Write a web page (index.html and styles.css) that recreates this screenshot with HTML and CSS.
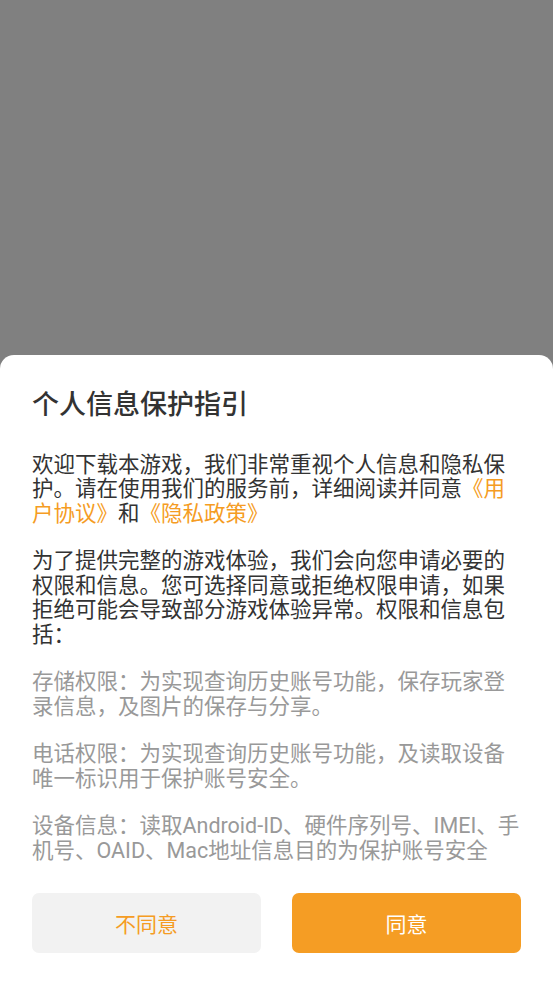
FILE: index.html
```html
<!DOCTYPE html>
<html lang="zh-CN">
<head>
<meta charset="utf-8">
<title>个人信息保护指引</title>
<link rel="stylesheet" href="styles.css">
</head>
<body>
<div class="overlay">
  <div class="sheet">
    <h1 class="title">个人信息保护指引</h1>
    <div class="content">
      <p class="para">欢迎下载本游戏，我们非常重视个人信息和隐私保护。请在使用我们的服务前，详细阅读并同意<span class="link">《用户协议》</span>和<span class="link">《隐私政策》</span></p>
      <p class="para">为了提供完整的游戏体验，我们会向您申请必要的权限和信息。您可选择同意或拒绝权限申请，如果拒绝可能会导致部分游戏体验异常。权限和信息包括：</p>
      <p class="para muted">存储权限：为实现查询历史账号功能，保存玩家登录信息，及图片的保存与分享。</p>
      <p class="para muted">电话权限：为实现查询历史账号功能，及读取设备唯一标识用于保护账号安全。</p>
      <p class="para muted">设备信息：读取Android-ID、硬件序列号、IMEI、手机号、OAID、Mac地址信息目的为保护账号安全</p>
    </div>
    <div class="actions">
      <button class="btn btn-decline" type="button">不同意</button>
      <button class="btn btn-accept" type="button">同意</button>
    </div>
  </div>
</div>
</body>
</html>
```

FILE: styles.css
```css
* { box-sizing: border-box; }
html, body {
  margin: 0;
  padding: 0;
  height: 100%;
}
body {
  font-family: Roboto, "Noto Sans CJK SC", sans-serif;
  background: #808080;
}
.overlay {
  height: 100%;
  display: flex;
  flex-direction: column;
  justify-content: flex-end;
}
.sheet {
  background: #ffffff;
  border-radius: 14px 14px 0 0;
  padding: 32px 32px 31px 32px;
}
.title {
  margin: 0;
  font-size: 27px;
  line-height: 36px;
  font-weight: 500;
  color: #333333;
}
.content {
  margin-top: 30px;
  display: flex;
  flex-direction: column;
  gap: 23px;
}
.para {
  margin: 0;
  font-size: 21.5px;
  line-height: 24.5px;
  color: #333333;
  word-break: break-all;
}
.muted { color: #999999; }
.link { color: #f59c23; }
.actions {
  margin-top: 30px;
  display: flex;
  gap: 31px;
}
.btn {
  flex: 1;
  height: 60px;
  border: none;
  border-radius: 7px;
  font-family: Roboto, "Noto Sans CJK SC", sans-serif;
  font-size: 21px;
}
.btn-decline {
  background: #f2f2f2;
  color: #f59c23;
}
.btn-accept {
  background: #f59d24;
  color: #ffffff;
}
```
